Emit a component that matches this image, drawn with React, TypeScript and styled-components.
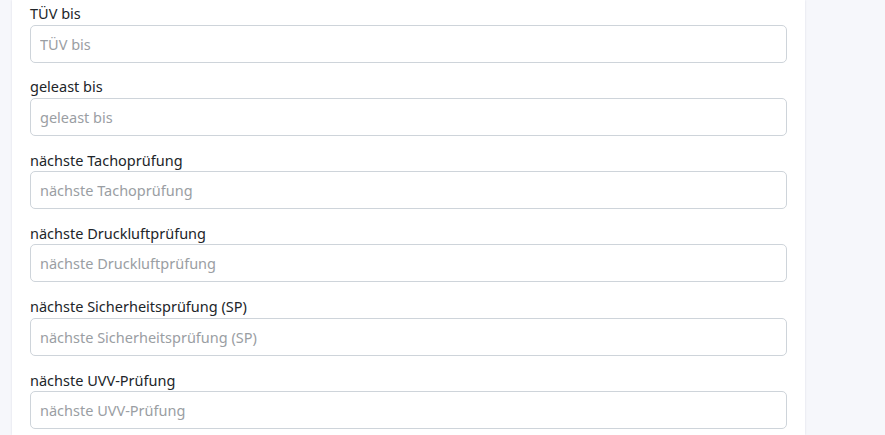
import React from "react";
import styled, { createGlobalStyle } from "styled-components";

const Global = createGlobalStyle`
  html, body { margin: 0; padding: 0; background: #f6f7fb; }
  body { font-family: "Noto Sans", "Open Sans", sans-serif; overflow: hidden; }
  * { box-sizing: border-box; }
`;

const Page = styled.div`
  display: flex;
  align-items: flex-start;
  height: 435px;
  padding-left: 12px;
`;

const Card = styled.div`
  width: 793px;
  height: 435px;
  background: #ffffff;
  box-shadow: 0 0 2px rgba(40, 50, 90, 0.12);
  padding: 2px 18px 0 18px;
  display: flex;
  flex-direction: column;
`;

const Group = styled.div`
  display: flex;
  flex-direction: column;
  margin-bottom: 12.83px;
`;

const Label = styled.label`
  font-size: 14.5px;
  line-height: 22.5px;
  color: #212529;
`;

const Input = styled.input`
  height: 38px;
  width: 757px;
  border: 1px solid #ced4da;
  border-radius: 5px;
  padding: 0 9px;
  font-family: inherit;
  font-size: 14.5px;
  color: #495057;
  background: #fff;
  outline: none;
  &::placeholder { color: #9a9ea3; }
`;

const fields = [
  "TÜV bis",
  "geleast bis",
  "nächste Tachoprüfung",
  "nächste Druckluftprüfung",
  "nächste Sicherheitsprüfung (SP)",
  "nächste UVV-Prüfung",
];

export default function App() {
  return (
    <>
      <Global />
      <Page>
        <Card>
          {fields.map((f) => (
            <Group key={f}>
              <Label>{f}</Label>
              <Input placeholder={f} />
            </Group>
          ))}
        </Card>
      </Page>
    </>
  );
}
